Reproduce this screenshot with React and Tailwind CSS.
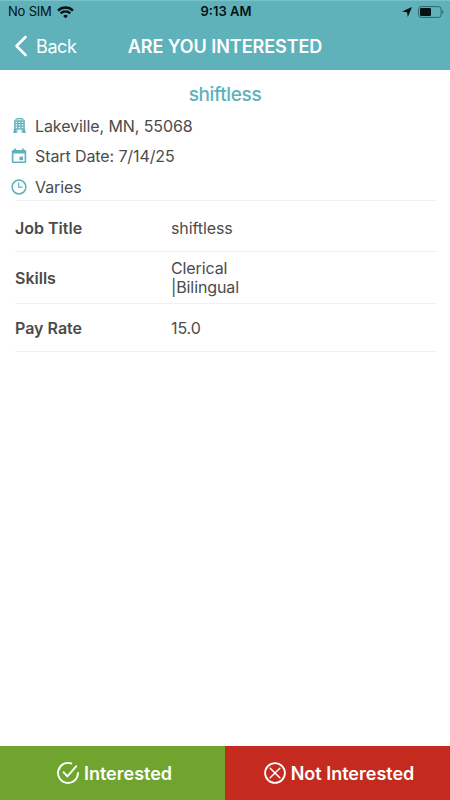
const details = [
  { icon: BuildingIcon, text: "Lakeville, MN, 55068" },
  { icon: CalendarIcon, text: "Start Date: 7/14/25" },
  { icon: ClockIcon, text: "Varies" },
];

const rows = [
  { label: "Job Title", lines: ["shiftless"], height: "h-[51px] pt-[3px]", valueClass: "pt-px" },
  { label: "Skills", lines: ["Clerical", "|Bilingual"], height: "h-[52px]", valueClass: "pt-px" },
  { label: "Pay Rate", lines: ["15.0"], height: "h-[48px] pt-px", valueClass: "" },
];

function WifiIcon() {
  return (
    <svg className="ml-[5px] h-[13px] w-[17px]" viewBox="0 0 17 13" fill="none" stroke="#051114">
      <path d="M1 4.6a10.6 10.6 0 0 1 15 0" strokeWidth="2.4" />
      <path d="M3.7 7.4a6.8 6.8 0 0 1 9.6 0" strokeWidth="2.2" />
      <path d="M8.5 12.3 6.1 9.9a3.4 3.4 0 0 1 4.8 0z" fill="#051114" stroke="none" />
    </svg>
  );
}

function LocationIcon() {
  return (
    <svg className="h-[10px] w-[10px]" viewBox="0 0 10 10" fill="#051114">
      <path d="M10 0 5.8 10 5 5.2 0 4.6z" />
    </svg>
  );
}

function BatteryIcon() {
  return (
    <svg className="ml-[6px] h-[12px] w-[26px]" viewBox="0 0 26 12">
      <rect x=".6" y=".6" width="22.5" height="10.8" rx="2.6" fill="none" stroke="#2f6469" />
      <rect x="2" y="2" width="11" height="8" rx="1.2" fill="#051114" />
      <path d="M24.3 4v4c1.6-.5 1.6-3.5 0-4z" fill="#2f6469" />
    </svg>
  );
}

function BuildingIcon() {
  return (
    <svg className="h-[16px] w-[16px]" viewBox="0 0 16 16" fill="none" stroke="#5fb1ba">
      <path d="M4.5 1.6C5.5.4 11.5.4 12.5 1.6" strokeWidth="1.2" />
      <path d="M3 3h11M3.5 5.6h10M3.500 8.200h10M3.500 10.800h10" strokeWidth="1.3" />
      <path d="M4 3v9M7 3v8M10 3v8M13 3v9" strokeWidth="1.4" />
      <path d="M4 11v3.700M13 11v3.700" strokeWidth="2.4" />
      <path d="M2 14.200h4.200M10.800 14.200h4.200M6 10.800v3M11 10.800v3" strokeWidth="1.1" />
    </svg>
  );
}

function CalendarIcon() {
  return (
    <svg className="h-[16px] w-[16px]" viewBox="0 0 16 16" fill="#5fb1ba">
      <path
        fillRule="evenodd"
        d="M3.3.5H5v1.400h6V.5h1.700v1.400h1.100c.8 0 1.400.6 1.400 1.400v10.400c0 .8-.6 1.400-1.400 1.400H2.200c-.8 0-1.400-.6-1.400-1.400V3.300c0-.8.6-1.400 1.400-1.400h1.100zM2.400 5.600v7.900h11.200V5.600z"
      />
      <path d="M8.5 8.6h3.600v3.600H8.500z" />
    </svg>
  );
}

function ClockIcon() {
  return (
    <svg className="h-[16px] w-[16px]" viewBox="0 0 16 16" fill="none" stroke="#5fb1ba">
      <circle cx="8" cy="8" r="6.9" strokeWidth="1.5" />
      <path d="M7.700 3.600V8.200h3.800" strokeWidth="1.2" />
    </svg>
  );
}

function CheckIcon() {
  return (
    <svg className="h-6 w-6" viewBox="0 0 24 24" fill="none" stroke="#fff" strokeWidth="1.9" strokeLinecap="round" strokeLinejoin="round">
      <path d="M15.3 2.5A10 10 0 1 0 22 12" />
      <path d="M7.700 11.300 11.400 15.400 20.300 5.200" />
    </svg>
  );
}

function CrossIcon() {
  return (
    <svg className="h-6 w-6" viewBox="0 0 24 24" fill="none" stroke="#fff" strokeLinecap="round">
      <circle cx="12" cy="12" r="9.9" strokeWidth="1.8" />
      <path d="M7.200 7.200l9.600 9.600M16.800 7.200l-9.600 9.600" strokeWidth="1.5" />
    </svg>
  );
}

function Header() {
  return (
    <header className="h-[70px] border-t border-[#77c3cc] bg-[#5fb1ba]">
      <div className="grid h-[22px] grid-cols-3 items-center pl-2 pr-[6px] text-[13px] text-[#051114]">
        <div className="flex items-center">
          <span className="tracking-[-0.2px]">No SIM</span>
          <WifiIcon />
        </div>
        <span className="text-center font-semibold">9:13 AM</span>
        <div className="flex items-center justify-end">
          <LocationIcon />
          <BatteryIcon />
        </div>
      </div>
      <div className="grid h-[46px] grid-cols-[1fr_auto_1fr] items-center text-white">
        <button className="flex items-center pl-[14px] text-[18px]">
          <svg className="h-[22px] w-[14px]" viewBox="0 0 14 22" fill="none" stroke="#fff" strokeWidth="2.6" strokeLinecap="round" strokeLinejoin="round">
            <path d="M11.5 2 2.5 11l9 9" />
          </svg>
          <span className="ml-[8px] tracking-[-0.4px]">Back</span>
        </button>
        <h1 className="pt-px text-[18px] font-semibold tracking-[-0.05px]">ARE YOU INTERESTED</h1>
      </div>
    </header>
  );
}

export default function App() {
  return (
    <div className="flex h-[800px] w-[450px] flex-col bg-white font-['Inter',sans-serif] text-[#4b4b4b]">
      <Header />
      <main className="flex-1 pt-[11px]">
        <h2 className="text-center text-[19px] font-medium leading-[28px] tracking-[-0.35px] text-[#5fb1ba]">shiftless</h2>
        <ul className="h-[91px] pl-[11px] pt-[2px]">
          {details.map(({ icon: Icon, text }) => (
            <li key={text} className="flex h-[30.3px] items-center gap-2 text-[16px] tracking-[-0.1px]">
              <Icon />
              <span>{text}</span>
            </li>
          ))}
        </ul>
        <div className="ml-[15px] mr-[14px] border-t border-[#f0f0f0] text-[16px]">
          {rows.map((row) => (
            <div key={row.label} className={`flex items-center border-b border-[#f0f0f0] ${row.height}`}>
              <span className="w-[156px] font-semibold">{row.label}</span>
              <div className={`relative leading-[19px] tracking-[-0.1px] ${row.valueClass}`}>
                {row.lines.map((line) => (
                  <p key={line}>{line}</p>
                ))}
              </div>
            </div>
          ))}
        </div>
      </main>
      <footer className="grid h-[54px] grid-cols-2 text-[18px] font-semibold text-white">
        <button className="flex items-center justify-center gap-1 bg-[#6fa52f] pl-[3px]">
          <CheckIcon />
          <span>Interested</span>
        </button>
        <button className="flex items-center justify-center gap-1 bg-[#c42b1e] pl-[2px]">
          <CrossIcon />
          <span>Not Interested</span>
        </button>
      </footer>
    </div>
  );
}
